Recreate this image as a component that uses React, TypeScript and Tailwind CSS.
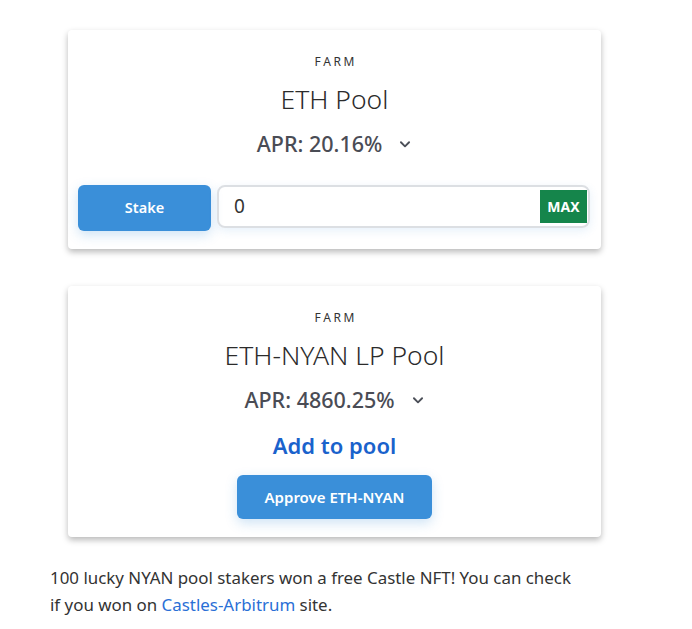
import React from "react";

const font = { fontFamily: '"Noto Sans", "Open Sans", sans-serif' };

// Small chevron next to the APR value
const Chevron = () => (
  <svg width="14" height="14" viewBox="0 0 24 24" fill="none" stroke="#4b4f58" strokeWidth="3.2" strokeLinecap="round" strokeLinejoin="round">
    <path d="M5 9l7 7 7-7" />
  </svg>
);

const PoolHeader = ({ name, apr }: { name: string; apr: string }) => (
  <>
    <p className="text-[12px] leading-[16px] tracking-[0.22em] text-[#333] pl-[0.22em]">FARM</p>
    <h2 className="mt-[11px] text-[26.5px] leading-[36px] font-light text-[#2b2b2b]">{name}</h2>
    <div className="mt-[13px] flex items-center justify-center gap-[16px] text-[21.5px] leading-[28px] font-medium text-[#4a4c55]">
      <span>APR: {apr}</span>
      <Chevron />
    </div>
  </>
);

export default function App() {
  return (
    <div className="bg-white min-h-[629px] pt-[30px] pl-[50px]" style={font}>
      <div className="w-[569px]">
        <div className="mx-[18px] rounded bg-white pt-[24px] pb-[18px] text-center shadow-[0_3px_6px_rgba(0,0,0,0.28)]">
          <PoolHeader name="ETH Pool" apr="20.16%" />
          <div className="mt-[27px] flex items-start gap-[6px] pl-[10px] pr-[11px]">
            <button className="h-[46px] w-[133px] rounded-md bg-[#3a8fd9] text-[14.5px] font-semibold text-white shadow-[0_4px_12px_rgba(58,143,217,0.25)]">
              Stake
            </button>
            <div className="flex h-[43px] flex-1 items-center rounded-lg border-2 border-[#dcdfe3] pl-[15px] pr-[1px] shadow-[0_3px_10px_rgba(58,143,217,0.12)]">
              <span className="flex-1 text-left text-[19px] text-[#333]">0</span>
              <span className="flex h-[33px] w-[47px] items-center justify-center bg-[#15854b] text-[14px] font-bold text-white">
                MAX
              </span>
            </div>
          </div>
        </div>

        <div className="mx-[18px] mt-[37px] rounded bg-white pt-[24px] pb-[18px] text-center shadow-[0_3px_6px_rgba(0,0,0,0.28)]">
          <PoolHeader name="ETH-NYAN LP Pool" apr="4860.25%" />
          <p className="mt-[16px] text-[22px] leading-[30px] font-semibold text-[#1a62cc]">Add to pool</p>
          <button className="mt-[15px] h-[44px] w-[195px] rounded-md bg-[#3a8fd9] text-[15px] font-semibold text-white shadow-[0_4px_12px_rgba(58,143,217,0.25)]">
            Approve ETH-NYAN
          </button>
        </div>

        <p className="mt-[27px] text-[16.9px] leading-[27px] text-[#333]">
          100 lucky NYAN pool stakers won a free Castle NFT! You can check
          <br />
          if you won on <a className="text-[#2a6fd6]">Castles-Arbitrum</a> site.
        </p>
      </div>
    </div>
  );
}
